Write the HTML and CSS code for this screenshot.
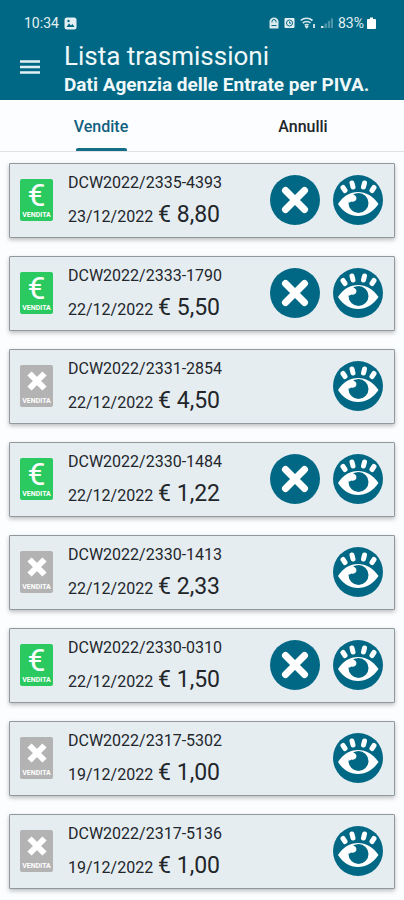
FILE: index.html
```html
<!DOCTYPE html>
<html lang="it">
<head>
    <meta charset="UTF-8">
    <meta name="viewport" content="width=device-width, initial-scale=1.0">
    <title>Lista trasmissioni</title>
    <link rel="stylesheet" href="styles.css">
</head>
<body>
    <!-- shared icons -->
    <svg class="sprite" aria-hidden="true">
        <symbol id="icon-cross" viewBox="0 0 50 50">
            <circle cx="25" cy="25" r="25" fill="#006884"/>
            <path d="M15.5 15.5 34.5 34.5M34.5 15.5 15.5 34.5" stroke="#fff" stroke-width="7" stroke-linecap="round"/>
        </symbol>
        <symbol id="icon-eye" viewBox="0 0 50 50">
            <circle cx="25" cy="25" r="25" fill="#006884"/>
            <g stroke="#fff" stroke-width="5" stroke-linecap="round">
                <path d="M10 12.500 12 15.500M19 8 20 12M31.500 8 30.500 12M41 12.500 39 15.500"/>
            </g>
            <path d="M5 29C10 21 17 17 25 17S40 21 45.500 29C40 37 33 41 25 41S10 37 5 29Z" fill="#fff"/>
            <circle cx="25.500" cy="28" r="10" fill="#006884"/>
            <path d="M15.500 24C16 19.500 21 18.500 23 21.500C24.500 25 21.500 27.500 18.500 26.500L15.500 28Z" fill="#fff"/>
        </symbol>
        <symbol id="icon-void" viewBox="0 0 20 20">
            <path d="M2.500 2.500 17.500 17.500M17.500 2.500 2.500 17.500" stroke="#fff" stroke-width="6"/>
        </symbol>
    </svg>

    <header class="header">
        <div class="status-bar">
            <div class="status-left">
                <span>10:34</span>
                <svg width="13" height="13" viewBox="0 0 13 13" aria-hidden="true">
                    <rect x=".5" y=".5" width="12" height="12" rx="2.500" fill="#e3f0f3"/>
                    <path d="M2.500 10 5 6.500 7 8.500 8.500 7 10.500 10Z" fill="#006884"/>
                    <circle cx="4.500" cy="4" r="1.200" fill="#006884"/>
                </svg>
            </div>
            <div class="status-right">
                <svg width="10" height="12" viewBox="0 0 10 12" aria-hidden="true">
                    <path d="M.5 11.500V4.500C.5 2.500 2.500 .5 5 .5S9.500 2.500 9.500 4.500V11.500Z" fill="#d9eaee"/>
                    <path d="M3 5.500V4.500A2 2 0 0 1 7 4.500V5.500M2.500 8.500H7.500" stroke="#006884" fill="none"/>
                </svg>
                <svg width="11" height="12" viewBox="0 0 11 12" aria-hidden="true">
                    <rect x=".5" y="1" width="10" height="10" rx="1" fill="#e3f0f3"/>
                    <circle cx="5.500" cy="6" r="3" fill="none" stroke="#006884"/>
                    <path d="M5.500 4.500V6.200H7" stroke="#006884" fill="none"/>
                </svg>
                <svg width="16" height="12" viewBox="0 0 16 12" fill="none" stroke="#d9eaee" aria-hidden="true">
                    <path d="M.8 3.500C4 .5 9 .5 12.500 3.500M2.800 6C5 4 8.500 4 10.500 6M4.800 8.300C6 7.200 7.500 7.200 8.500 8.300" stroke-width="1.700"/>
                    <path d="M5.300 9 6.700 10.500 8 9M14 7V11" stroke-width="1.800"/>
                </svg>
                <svg width="12" height="12" viewBox="0 0 12 12" fill="#d9eaee" aria-hidden="true">
                    <path d="M0 9H2.500V11H0Z"/>
                    <path d="M3.500 6.500H6V11H3.500ZM6.800 4H9V11H6.800ZM9.800 1.500H12V11H9.800Z" opacity=".35"/>
                </svg>
                <div class="battery">
                    <span>83%</span>
                    <svg width="9" height="12" viewBox="0 0 9 12" fill="#fff" aria-hidden="true">
                        <path d="M3 .5H6V2H8C8.500 2 9 2.500 9 3V11C9 11.500 8.500 12 8 12H1C.5 12 0 11.500 0 11V3C0 2.500 .5 2 1 2H3Z"/>
                    </svg>
                </div>
            </div>
        </div>
        <div class="toolbar">
            <button type="button" class="menu-btn" aria-label="Menu">
                <svg width="20" height="14" viewBox="0 0 20 14" aria-hidden="true">
                    <path d="M0 1.500H20M0 7H20M0 12.500H20" stroke="#e3f0f3" stroke-width="2.600"/>
                </svg>
            </button>
            <div class="titles">
                <h1>Lista trasmissioni</h1>
                <p>Dati Agenzia delle Entrate per PIVA.</p>
            </div>
        </div>
    </header>

    <nav class="tabs">
        <button type="button" class="tab active">Vendite</button>
        <button type="button" class="tab">Annulli</button>
    </nav>

    <main class="list">
        <article class="card">
            <div class="badge sale"><span class="euro">€</span><span class="badge-label">VENDITA</span></div>
            <div class="info">
                <div class="code">DCW2022/2335-4393</div>
                <div class="detail">23/12/2022 <strong>€ 8,80</strong></div>
            </div>
            <div class="actions">
                <button type="button" aria-label="Annulla"><svg><use href="#icon-cross"/></svg></button>
                <button type="button" aria-label="Visualizza"><svg><use href="#icon-eye"/></svg></button>
            </div>
        </article>
        <article class="card">
            <div class="badge sale"><span class="euro">€</span><span class="badge-label">VENDITA</span></div>
            <div class="info">
                <div class="code">DCW2022/2333-1790</div>
                <div class="detail">22/12/2022 <strong>€ 5,50</strong></div>
            </div>
            <div class="actions">
                <button type="button" aria-label="Annulla"><svg><use href="#icon-cross"/></svg></button>
                <button type="button" aria-label="Visualizza"><svg><use href="#icon-eye"/></svg></button>
            </div>
        </article>
        <article class="card">
            <div class="badge"><svg class="void"><use href="#icon-void"/></svg><span class="badge-label">VENDITA</span></div>
            <div class="info">
                <div class="code">DCW2022/2331-2854</div>
                <div class="detail">22/12/2022 <strong>€ 4,50</strong></div>
            </div>
            <div class="actions">
                <button type="button" aria-label="Visualizza"><svg><use href="#icon-eye"/></svg></button>
            </div>
        </article>
        <article class="card">
            <div class="badge sale"><span class="euro">€</span><span class="badge-label">VENDITA</span></div>
            <div class="info">
                <div class="code">DCW2022/2330-1484</div>
                <div class="detail">22/12/2022 <strong>€ 1,22</strong></div>
            </div>
            <div class="actions">
                <button type="button" aria-label="Annulla"><svg><use href="#icon-cross"/></svg></button>
                <button type="button" aria-label="Visualizza"><svg><use href="#icon-eye"/></svg></button>
            </div>
        </article>
        <article class="card">
            <div class="badge"><svg class="void"><use href="#icon-void"/></svg><span class="badge-label">VENDITA</span></div>
            <div class="info">
                <div class="code">DCW2022/2330-1413</div>
                <div class="detail">22/12/2022 <strong>€ 2,33</strong></div>
            </div>
            <div class="actions">
                <button type="button" aria-label="Visualizza"><svg><use href="#icon-eye"/></svg></button>
            </div>
        </article>
        <article class="card">
            <div class="badge sale"><span class="euro">€</span><span class="badge-label">VENDITA</span></div>
            <div class="info">
                <div class="code">DCW2022/2330-0310</div>
                <div class="detail">22/12/2022 <strong>€ 1,50</strong></div>
            </div>
            <div class="actions">
                <button type="button" aria-label="Annulla"><svg><use href="#icon-cross"/></svg></button>
                <button type="button" aria-label="Visualizza"><svg><use href="#icon-eye"/></svg></button>
            </div>
        </article>
        <article class="card">
            <div class="badge"><svg class="void"><use href="#icon-void"/></svg><span class="badge-label">VENDITA</span></div>
            <div class="info">
                <div class="code">DCW2022/2317-5302</div>
                <div class="detail">19/12/2022 <strong>€ 1,00</strong></div>
            </div>
            <div class="actions">
                <button type="button" aria-label="Visualizza"><svg><use href="#icon-eye"/></svg></button>
            </div>
        </article>
        <article class="card">
            <div class="badge"><svg class="void"><use href="#icon-void"/></svg><span class="badge-label">VENDITA</span></div>
            <div class="info">
                <div class="code">DCW2022/2317-5136</div>
                <div class="detail">19/12/2022 <strong>€ 1,00</strong></div>
            </div>
            <div class="actions">
                <button type="button" aria-label="Visualizza"><svg><use href="#icon-eye"/></svg></button>
            </div>
        </article>
    </main>
</body>
</html>
```
FILE: styles.css
```css
* {
    box-sizing: border-box;
}
body {
    margin: 0;
    background: #fcfdfe;
    color: #22262b;
    font-family: Roboto, sans-serif;
}
button {
    padding: 0;
    border: none;
    background: none;
    font: inherit;
    color: inherit;
    cursor: pointer;
}
svg {
    display: block;
}
.sprite {
    display: none;
}

/* header */
.header {
    background: #006884;
    color: #f0f8fa;
    padding: 13px 28px 2px 20px;
}
.status-bar {
    display: flex;
    justify-content: space-between;
    padding-left: 4px;
    font-size: 14px;
    line-height: 20px;
    color: #e3f0f3;
}
.status-left,
.status-right {
    display: flex;
    align-items: center;
    gap: 5px;
}
.battery {
    display: flex;
    align-items: center;
    gap: 3px;
}
.toolbar {
    display: flex;
    align-items: center;
    gap: 24px;
    padding-top: 7px;
}
.menu-btn {
    padding-bottom: 4px;
}
.titles {
    white-space: nowrap;
}
.titles h1 {
    margin: 0;
    font-size: 26px;
    font-weight: 400;
    line-height: 32px;
}
.titles p {
    margin: 0;
    font-size: 19px;
    font-weight: 700;
    line-height: 26px;
}

/* tabs */
.tabs {
    display: flex;
    border-bottom: 1px solid #dfe2e5;
}
.tab {
    flex: 1;
    display: flex;
    flex-direction: column;
    align-items: center;
    padding-top: 16px;
    font-size: 16px;
    font-weight: 500;
    line-height: 22px;
}
.tab::after {
    content: "";
    width: 51px;
    height: 3px;
    margin-top: 10px;
    border-radius: 2px 2px 0 0;
}
.tab.active {
    color: #135f80;
}
.tab.active::after {
    background: #146d87;
}

/* list */
.list {
    display: flex;
    flex-direction: column;
    gap: 18px;
    padding: 11px 9px 10px 9px;
}
.card {
    display: flex;
    align-items: center;
    height: 75px;
    padding: 0 11px 1px 10px;
    background: #e5edf1;
    border: 1px solid #92999e;
    border-radius: 1px;
    box-shadow: 0 2px 4px rgba(0,0,0,0.25);
}
.badge {
    display: flex;
    flex-direction: column;
    align-items: center;
    justify-content: space-between;
    width: 33px;
    height: 42px;
    padding: 6px 0 2px;
    border-radius: 2px;
    background: #b3b3b3;
    color: #fff;
}
.badge.sale {
    padding-top: 2px;
    background: #2bca60;
}
.euro {
    font-size: 32px;
    font-weight: 400;
    line-height: 28px;
}
.void {
    width: 20px;
    height: 20px;
}
.badge-label {
    font-size: 7px;
    font-weight: 700;
    line-height: 8px;
}
.info {
    flex: 1;
    padding: 6px 0 0 15px;
    white-space: nowrap;
}
.code {
    font-size: 16px;
    line-height: 24px;
}
.detail {
    margin-top: 2px;
    font-size: 16px;
    line-height: 36px;
}
.detail strong {
    margin-left: 1px;
    font-size: 23px;
    font-weight: 400;
}
.actions {
    display: flex;
    gap: 13px;
}
.actions svg {
    width: 50px;
    height: 50px;
}
```
